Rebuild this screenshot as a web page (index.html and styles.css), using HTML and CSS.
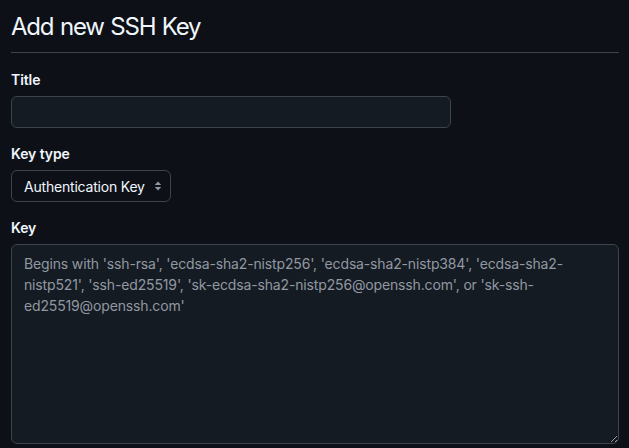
FILE: index.html
```html
<!DOCTYPE html>
<html lang="en">
<head>
<meta charset="utf-8">
<title>Add new SSH Key</title>
<link rel="stylesheet" href="styles.css">
</head>
<body>
<main class="page">
  <div class="subhead">
    <h1 class="subhead-title">Add new SSH Key</h1>
  </div>
  <form class="form">
    <div class="form-group">
      <label class="form-label" for="title">Title</label>
      <input class="form-input title-input" id="title" type="text">
    </div>
    <div class="form-group">
      <label class="form-label" for="keytype">Key type</label>
      <div class="select-wrap">
        <select class="form-select" id="keytype">
          <option>Authentication Key</option>
          <option>Signing Key</option>
        </select>
        <svg class="select-icon" width="8" height="12" viewBox="0 0 8 12" aria-hidden="true">
          <path d="M4 1.5 L7.2 5 H0.8 Z" fill="#9198a1"/>
          <path d="M4 10.5 L0.8 7 H7.2 Z" fill="#9198a1"/>
        </svg>
      </div>
    </div>
    <div class="form-group">
      <label class="form-label" for="key">Key</label>
      <textarea class="form-input key-input" id="key" placeholder="Begins with 'ssh-rsa', 'ecdsa-sha2-nistp256', 'ecdsa-sha2-nistp384', 'ecdsa-sha2-nistp521', 'ssh-ed25519', 'sk-ecdsa-sha2-nistp256@openssh.com', or 'sk-ssh-ed25519@openssh.com'"></textarea>
    </div>
  </form>
</main>
</body>
</html>
```

FILE: styles.css
```css
* { box-sizing: border-box; }

html, body {
  margin: 0;
  background: #0d1117;
  color: #f0f6fc;
  font-family: Inter, "Noto Sans", "Liberation Sans", sans-serif;
  font-size: 14px;
}

.page {
  padding: 9px 10px 0 11px;
}

.subhead {
  border-bottom: 1px solid #3d444d;
  padding-bottom: 7px;
}

.subhead-title {
  margin: 0;
  font-size: 24px;
  font-weight: 400;
  line-height: 36px;
  letter-spacing: -1.2px;
  word-spacing: 1px;
}

.form {
  display: flex;
  flex-direction: column;
  gap: 16px;
  padding-top: 17px;
}

.form-group {
  display: flex;
  flex-direction: column;
  align-items: flex-start;
}

.form-label {
  font-size: 14px;
  font-weight: 600;
  line-height: 20px;
  margin-bottom: 6px;
  letter-spacing: -0.1px;
}

.form-input {
  background: #151b23;
  border: 1px solid #3d444d;
  border-radius: 6px;
  color: #f0f6fc;
  font-family: inherit;
  font-size: 14px;
  outline: none;
}

.title-input {
  width: 440px;
  height: 32px;
  padding: 0 12px;
}

.select-wrap {
  position: relative;
}

.form-select {
  appearance: none;
  -webkit-appearance: none;
  width: 160px;
  height: 32px;
  padding: 0 20px 0 12px;
  background: #0d1117;
  border: 1px solid #3d444d;
  border-radius: 6px;
  color: #f0f6fc;
  font-family: inherit;
  font-size: 14px;
  letter-spacing: -0.2px;
  outline: none;
}

.select-icon {
  position: absolute;
  right: 9px;
  top: 10px;
  pointer-events: none;
}

.key-input {
  width: 100%;
  height: 200px;
  padding: 8px 12px;
  line-height: 21px;
  letter-spacing: -0.15px;
  resize: vertical;
}

.key-input::placeholder {
  color: #9198a1;
  opacity: 1;
}
```
